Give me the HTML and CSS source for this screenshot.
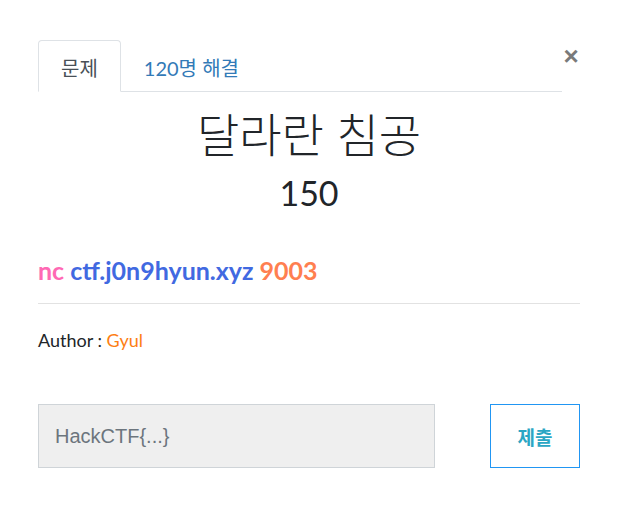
FILE: index.html
```html
<!DOCTYPE html>
<html lang="ko">
<head>
    <meta charset="UTF-8">
    <title>달라란 침공</title>
    <link rel="stylesheet" href="styles.css">
</head>
<body>
    <div class="modal">
        <div class="modal-head">
            <ul class="tabs">
                <li class="tab active">문제</li>
                <li class="tab">120명 해결</li>
            </ul>
            <button class="close">&times;</button>
        </div>
        <h1 class="title">달라란 침공</h1>
        <div class="points">150</div>
        <div class="desc">
            <p class="cmd"><span class="nc">nc</span> <span class="host">ctf.j0n9hyun.xyz</span> <span class="port">9003</span></p>
            <hr>
            <p class="author">Author : <span class="name">Gyul</span></p>
        </div>
        <form class="submit-row">
            <input type="text" class="flag" placeholder="HackCTF{...}">
            <button type="button" class="btn">제출</button>
        </form>
    </div>
</body>
</html>
```

FILE: styles.css
```css
* {
    margin: 0;
    padding: 0;
    box-sizing: border-box;
}
body {
    background: white;
    font-family: Lato, "Noto Sans CJK KR", sans-serif;
    color: #212529;
}
.modal {
    width: 618px;
    padding: 40px 38px 0 38px;
}
.modal-head {
    display: flex;
    align-items: flex-start;
}
.tabs {
    flex: 1;
    display: flex;
    list-style: none;
    border-bottom: 1px solid #dee2e6;
}
.tab {
    height: 52px;
    padding: 0 22px;
    font-size: 20px;
    line-height: 54px;
    color: #337ab7;
    border: 1px solid transparent;
    border-radius: 4px 4px 0 0;
    margin-bottom: -1px;
}
.tab.active {
    color: #495057;
    border-color: #dee2e6 #dee2e6 white;
    background: white;
}
.close {
    width: 18px;
    background: none;
    border: none;
    font-family: "Liberation Sans", sans-serif;
    font-size: 26px;
    font-weight: bold;
    line-height: 32px;
    color: #7a7a7a;
}
.title {
    text-align: center;
    font-size: 46px;
    font-weight: 300;
    line-height: 56px;
    margin-top: 15px;
}
.points {
    text-align: center;
    font-size: 34px;
    line-height: 44px;
    margin-top: 8px;
}
.desc {
    margin-top: 38px;
}
.cmd {
    font-size: 25px;
    font-weight: bold;
    line-height: 34px;
}
.nc { color: #ff69b4; }
.host { color: #4169e1; }
.port { color: #ff7f50; }
hr {
    border: none;
    border-top: 1px solid #e2e2e2;
    margin: 16px 0 23px;
}
.author {
    font-size: 18px;
    line-height: 26px;
}
.name { color: #fd7e14; }
.submit-row {
    display: flex;
    justify-content: space-between;
    margin-top: 51px;
}
.flag {
    width: 397px;
    height: 64px;
    padding: 0 16px;
    background: #efefef;
    border: 1px solid #cfd4d8;
    font-family: "Liberation Sans", sans-serif;
    font-size: 20px;
    color: #495057;
}
.flag::placeholder {
    color: #6c757d;
}
.btn {
    width: 90px;
    height: 64px;
    background: white;
    border: 1px solid #2196f3;
    font-family: "Noto Sans CJK KR", sans-serif;
    font-size: 19px;
    font-weight: bold;
    color: #2ba6c4;
}
```
